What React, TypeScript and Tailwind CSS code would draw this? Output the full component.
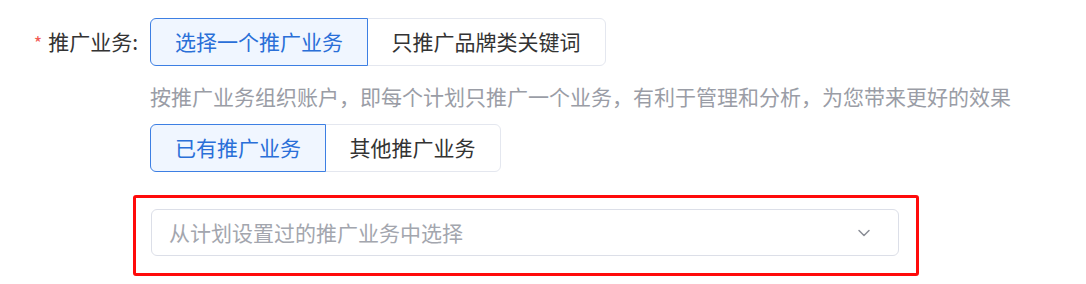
import { ChevronDown } from 'lucide-react';

const font = { fontFamily: '"Noto Sans CJK SC", "Noto Sans", sans-serif' };

function Segmented({ options, active }: { options: string[]; active: number }) {
  return (
    <div className="flex h-[48px]">
      {options.map((o, i) => {
        const on = i === active;
        const first = i === 0;
        const last = i === options.length - 1;
        return (
          <div
            key={o}
            className={
              'flex items-center justify-center px-[24px] text-[21px] ' +
              (first ? 'rounded-l-[6px] ' : '-ml-[1.5px] ') +
              (last ? 'rounded-r-[6px] ' : '') +
              (on
                ? 'relative z-10 border-[1.5px] border-[#3d7fe3] bg-[#f0f6ff] text-[#2a6fd8]'
                : 'border-[1.5px] border-[#e4e7ef] bg-white text-[#333333]')
            }
          >
            {o}
          </div>
        );
      })}
    </div>
  );
}

export default function App() {
  return (
    <div className="h-[284px] w-[1086px] bg-white pt-[18px]" style={font}>
      <div className="flex">
        <div className="flex h-[48px] w-[150px] items-center justify-end pr-[12px] text-[21px] text-[#333333]">
          <span className="mr-[6px] text-[18px] text-[#f25c54]">*</span>
          <span>推广业务:</span>
        </div>
        <div className="flex flex-col">
          <div className="flex">
            <Segmented options={['选择一个推广业务', '只推广品牌类关键词']} active={0} />
          </div>
          <div className="mb-[14px] mt-[16px] text-[21px] leading-[28px] text-[#9a9da6]">
            按推广业务组织账户，即每个计划只推广一个业务，有利于管理和分析，为您带来更好的效果
          </div>
          <div className="flex">
            <Segmented options={['已有推广业务', '其他推广业务']} active={0} />
          </div>
          <div className="-ml-[17px] mt-[23px] w-[786px] rounded-[3px] border-[3px] border-[#ff0a0a] pb-[17px] pl-[15px] pr-[17px] pt-[11px]">
            <div className="flex h-[47px] w-[748px] items-center justify-between rounded-[6px] border-[1.5px] border-[#dcdfe8] pl-[17px] pr-[24px]">
              <span className="text-[21px] text-[#a3a6ae]">从计划设置过的推广业务中选择</span>
              <ChevronDown size={20} strokeWidth={1.8} className="text-[#8a8d96]" />
            </div>
          </div>
        </div>
      </div>
    </div>
  );
}
